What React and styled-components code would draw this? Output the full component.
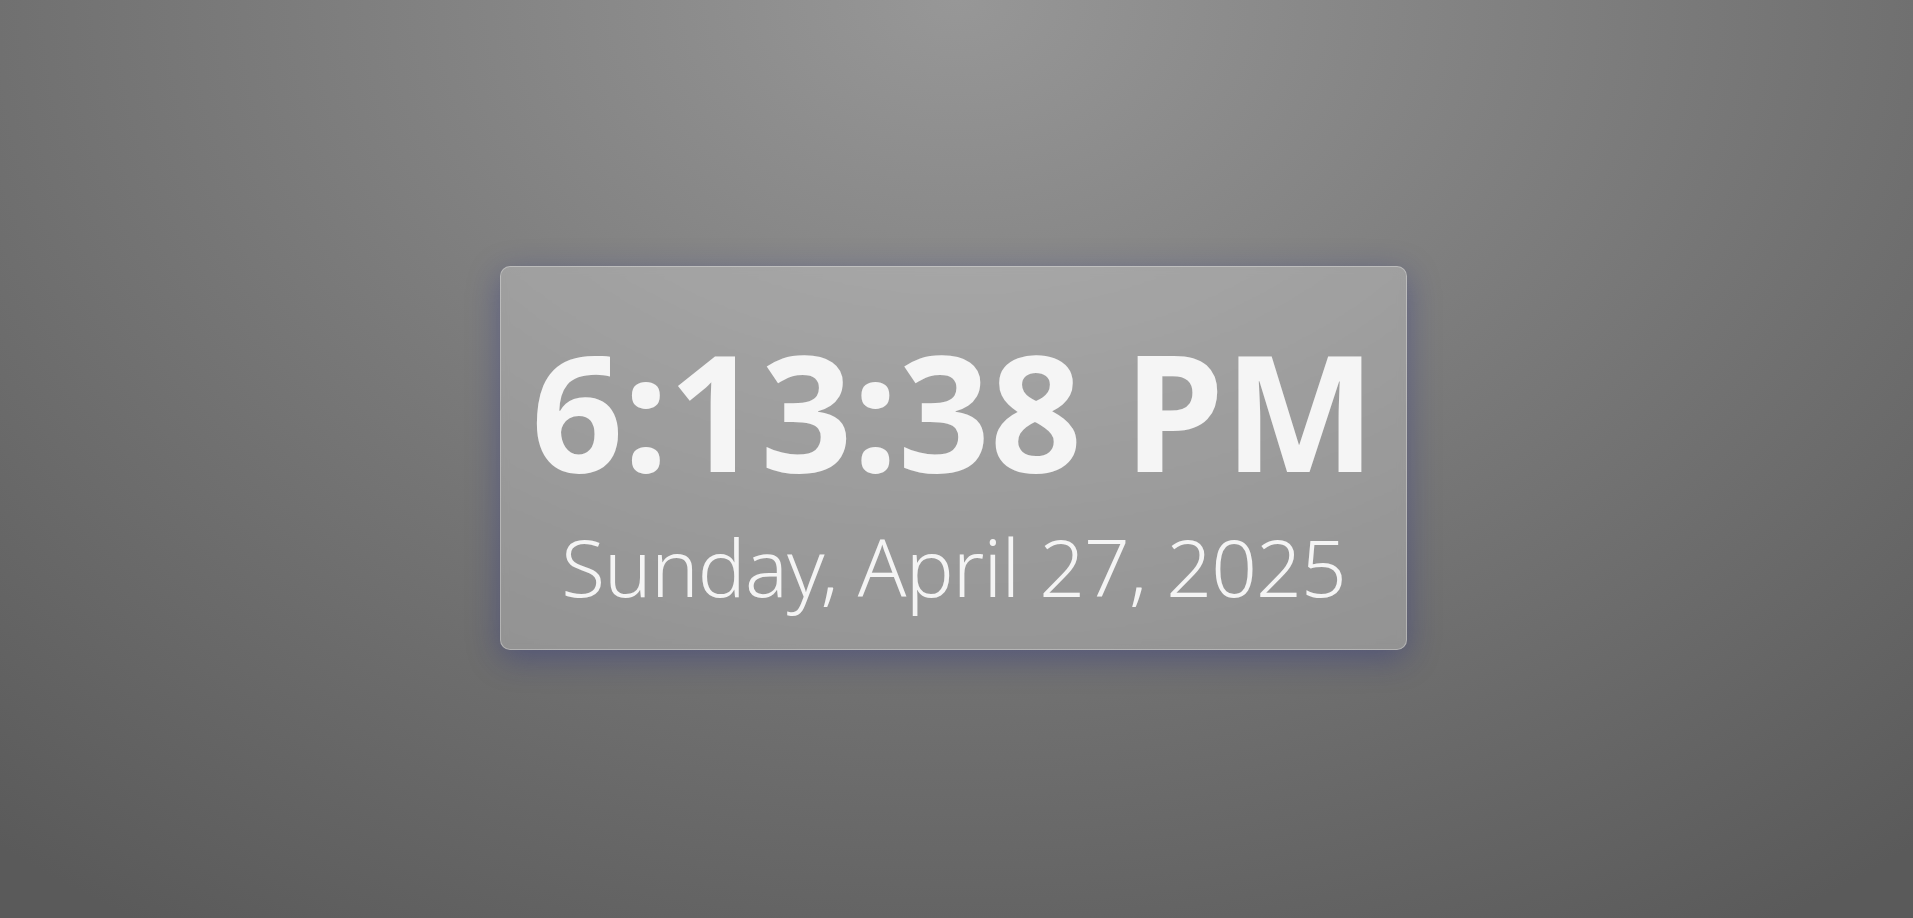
import React from "react";
import styled, { createGlobalStyle } from "styled-components";

const Global = createGlobalStyle`
  html, body { margin: 0; padding: 0; height: 100%; }
  body {
    font-family: "Noto Sans", "Open Sans", sans-serif;
    background: #6e6e6e;
  }
  #root { height: 100%; }
`;

const Page = styled.div`
  box-sizing: border-box;
  width: 100vw;
  height: 100vh;
  padding-right: 6px;
  padding-bottom: 2px;
  display: flex;
  align-items: center;
  justify-content: center;
  background: radial-gradient(ellipse 1500px 1100px at 50% 0%, #979797 0%, #5a5a5a 100%);
  overflow: hidden;
`;

const Card = styled.div`
  box-sizing: border-box;
  width: 907px;
  height: 384px;
  padding: 62px 24px 0;
  display: flex;
  flex-direction: column;
  align-items: center;
  gap: 36px;
  background: rgba(255, 255, 255, 0.25);
  border: 1px solid rgba(255, 255, 255, 0.3);
  border-radius: 10px;
  box-shadow: 0 8px 32px rgba(31, 38, 135, 0.37);
  backdrop-filter: blur(4px);
`;

const Time = styled.div`
  font-family: "Noto Sans", "Open Sans", sans-serif;
  font-weight: 700;
  font-size: 161px;
  line-height: 1;
  color: #f5f5f5;
  white-space: nowrap;
`;

const DateLine = styled.div`
  font-family: "Noto Sans", "Open Sans", sans-serif;
  font-weight: 300;
  font-size: 80px;
  line-height: 1;
  letter-spacing: -0.8px;
  color: #f4f4f4;
  white-space: nowrap;
`;

export default function App() {
  return (
    <>
      <Global />
      <Page>
        <Card>
          <Time>6:13:38 PM</Time>
          <DateLine>Sunday, April 27, 2025</DateLine>
        </Card>
      </Page>
    </>
  );
}
